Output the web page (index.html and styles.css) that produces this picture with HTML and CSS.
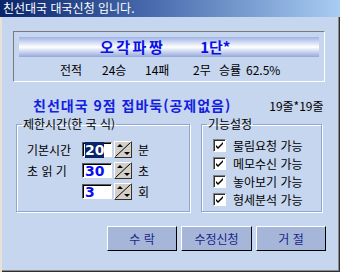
FILE: index.html
```html
<!DOCTYPE html>
<html lang="ko">
<head>
  <meta charset="UTF-8">
  <title>친선대국 대국신청</title>
  <link rel="stylesheet" href="styles.css">
</head>
<body>
  <div class="window">
    <div class="titlebar">친선대국 대국신청 입니다.</div>

    <div class="frame">
      <div class="player-panel">
        <div class="banner">
          <span class="player-name">오각파짱</span>
          <span class="player-rank">1단*</span>
        </div>
        <div class="stats">
          <span class="s1">전적</span>
          <span class="s2">24승</span>
          <span class="s3">14패</span>
          <span class="s4">2무</span>
          <span class="s5">승률</span>
          <span class="s6">62.5%</span>
        </div>
      </div>

      <div class="match-line">
        <span class="match-title">친선대국 9점 접바둑(공제없음)</span>
        <span class="board-size">19줄*19줄</span>
      </div>

      <div class="groups">
        <fieldset class="group time-group">
          <legend>제한시간(한 국 식)</legend>
          <div class="time-row">
            <span class="time-label">기본시간</span>
            <span class="num-input"><span class="selected">20</span></span>
            <span class="spin"><svg width="16" height="15" viewBox="0 0 16 15"><path d="M0.5 14.5 L15.5 0.5" stroke="#000" stroke-width="1"/><path d="M2 5 L5 2 L8 5 Z" fill="#000"/><path d="M9 10 L15 10 L12 13 Z" fill="#000"/></svg></span>
            <span class="unit">분</span>
          </div>
          <div class="time-row">
            <span class="time-label">초 읽 기</span>
            <span class="num-input">30</span>
            <span class="spin"><svg width="16" height="15" viewBox="0 0 16 15"><path d="M0.5 14.5 L15.5 0.5" stroke="#000" stroke-width="1"/><path d="M2 5 L5 2 L8 5 Z" fill="#000"/><path d="M9 10 L15 10 L12 13 Z" fill="#000"/></svg></span>
            <span class="unit">초</span>
          </div>
          <div class="time-row">
            <span class="time-label"></span>
            <span class="num-input">3</span>
            <span class="spin"><svg width="16" height="15" viewBox="0 0 16 15"><path d="M0.5 14.5 L15.5 0.5" stroke="#000" stroke-width="1"/><path d="M2 5 L5 2 L8 5 Z" fill="#000"/><path d="M9 10 L15 10 L12 13 Z" fill="#000"/></svg></span>
            <span class="unit">회</span>
          </div>
        </fieldset>

        <fieldset class="group option-group">
          <legend>기능설정</legend>
          <label class="check-row"><span class="checkbox"><svg width="9" height="9" viewBox="0 0 9 9"><path d="M1 4 L3 6 L8 1 L8 3 L3 8 L1 6 Z" fill="#000"/></svg></span>물림요청 가능</label>
          <label class="check-row"><span class="checkbox"><svg width="9" height="9" viewBox="0 0 9 9"><path d="M1 4 L3 6 L8 1 L8 3 L3 8 L1 6 Z" fill="#000"/></svg></span>메모수신 가능</label>
          <label class="check-row"><span class="checkbox"><svg width="9" height="9" viewBox="0 0 9 9"><path d="M1 4 L3 6 L8 1 L8 3 L3 8 L1 6 Z" fill="#000"/></svg></span>놓아보기 가능</label>
          <label class="check-row"><span class="checkbox"><svg width="9" height="9" viewBox="0 0 9 9"><path d="M1 4 L3 6 L8 1 L8 3 L3 8 L1 6 Z" fill="#000"/></svg></span>형세분석 가능</label>
        </fieldset>
      </div>

      <div class="buttons">
        <button class="btn">수 락</button>
        <button class="btn">수정신청</button>
        <button class="btn">거 절</button>
      </div>
    </div>
  </div>
</body>
</html>
```

FILE: styles.css
```css
body {
  margin: 0;
  padding: 0;
  font-family: "Noto Sans CJK KR", "DejaVu Sans", sans-serif;
  font-size: 12px;
  color: #000;
}

.window {
  width: 340px;
  height: 272px;
  background-color: #c6d6ee;
  display: flex;
  flex-direction: column;
  overflow: hidden;
}

.titlebar {
  height: 17px;
  line-height: 16px;
  padding-left: 3px;
  color: #fff;
  font-size: 12px;
  background: linear-gradient(to right, #0a246a, #4a6cae 45%, #a8ccf2);
}

.frame {
  flex: 1;
  box-shadow: inset 2px 0 0 #e6e2d8, inset -1px -1px 0 #303030, inset -2px -2px 0 #8a8a8a;
  padding: 14px 0 0 13px;
}

.player-panel {
  width: 310px;
  height: 49px;
  border: 1px solid #fff;
  border-top-color: #7a7a7a;
  border-left-color: #7a7a7a;
}

.banner {
  margin: 5px 0 0 5px;
  width: 300px;
  height: 20px;
  background: linear-gradient(#9eb2e6, #ffffff 50%, #94a8dc);
  display: flex;
  align-items: center;
  color: #0a10e8;
  font-weight: bold;
  font-size: 15px;
  line-height: 20px;
}

.player-name {
  margin-left: 81px;
  letter-spacing: 2.5px;
}

.player-rank {
  margin-left: 35px;
}

/* fixed column widths keep the stat words at their places */
.stats {
  display: flex;
  margin-top: 6px;
  padding-left: 46px;
  line-height: 14px;
  white-space: nowrap;
}

.s1 { width: 42px; }
.s2 { width: 43px; }
.s3 { width: 48px; }
.s4 { width: 26px; }
.s5 { width: 27px; }

.match-line {
  display: flex;
  align-items: baseline;
  margin-top: 13px;
  height: 17px;
}

.match-title {
  margin-left: 20px;
  color: #1420e0;
  font-weight: bold;
  font-size: 14px;
  letter-spacing: 1px;
}

.board-size {
  margin-left: 38px;
}

.groups {
  display: flex;
  margin-top: 6px;
}

.group {
  margin: 0;
  padding: 0;
  height: 94px;
  border: 1px solid #90a6d0;
  box-shadow: inset 1px 1px 0 #fff, 1px 1px 0 #fff;
  box-sizing: border-box;
}

.group legend {
  padding: 0 1px;
  margin-left: 5px;
  line-height: 12px;
}

.time-group {
  margin-left: 3px;
  width: 174px;
}

.option-group {
  margin-left: 11px;
  width: 121px;
}

.time-row {
  display: flex;
  align-items: center;
  height: 17px;
  margin-top: 4px;
  margin-left: 10px;
}

.time-row:first-of-type {
  margin-top: 11px;
}

.time-label {
  width: 55px;
}

.num-input {
  width: 26px;
  height: 13px;
  padding: 0 0 0 2px;
  background: #fff;
  border: 1px solid #fff;
  border-top-color: #5a5a5a;
  border-left-color: #5a5a5a;
  box-shadow: inset 1px 1px 0 #000;
  color: #0a10f0;
  font-weight: bold;
  font-size: 14px;
  line-height: 14px;
  font-family: "DejaVu Sans", sans-serif;
}

.selected {
  background: #0a246a;
  color: #fff;
}

.spin {
  margin-left: 2px;
  width: 16px;
  height: 15px;
  background: #d4d0c8;
  border: 1px solid #303030;
  border-top-color: #fff;
  border-left-color: #fff;
  display: flex;
}

.unit {
  margin-left: 6px;
}

.check-row {
  display: flex;
  align-items: center;
  height: 18px;
  margin-left: 11px;
}

.group legend + .check-row {
  margin-top: 6px;
}

.checkbox {
  width: 11px;
  height: 11px;
  margin-right: 7px;
  background: #fff;
  border: 1px solid #fff;
  border-top-color: #808080;
  border-left-color: #808080;
  box-shadow: inset 1px 1px 0 #303030;
  display: flex;
  align-items: center;
  justify-content: center;
}

.buttons {
  display: flex;
  gap: 4px;
  margin-top: 14px;
  margin-left: 94px;
}

.btn {
  width: 70px;
  height: 25px;
  padding: 0;
  background-color: #a6b6d8;
  border: 1px solid #000;
  border-top-color: #fff;
  border-left-color: #fff;
  color: #1a2488;
  font-family: "Noto Sans CJK KR", sans-serif;
  font-size: 12px;
}

.btn:nth-child(2) {
  width: 71px;
}
```
